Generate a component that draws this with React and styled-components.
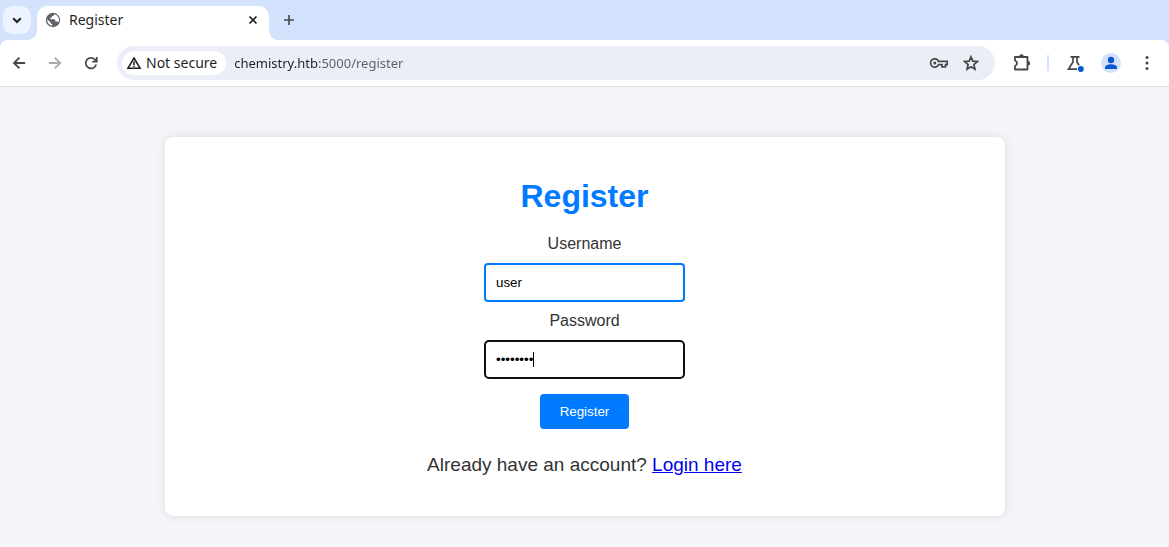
import React from "react";
import styled, { createGlobalStyle } from "styled-components";

const GlobalStyle = createGlobalStyle`
  *, *::before, *::after { box-sizing: border-box; }
  body {
    margin: 0;
    background: #f4f4f9;
    color: #333;
    font-family: "Liberation Sans", Arial, sans-serif;
  }
`;

const uiFont = `"Noto Sans", "Open Sans", sans-serif`;

const Browser = styled.div`
  display: flex;
  flex-direction: column;
  min-height: 100vh;
`;

const TabStrip = styled.header`
  display: flex;
  align-items: center;
  height: 40px;
  padding: 0 3px;
  background: #d3e3fd;
`;

const IconButton = styled.button`
  display: flex;
  align-items: center;
  justify-content: center;
  flex: none;
  width: ${(p) => p.$size || 28}px;
  height: ${(p) => p.$size || 28}px;
  padding: 0;
  border: 0;
  border-radius: ${(p) => p.$radius || "50%"};
  background: ${(p) => p.$fill || "transparent"};
  color: ${(p) => p.$color || "#474747"};

  svg { display: block; flex: none; }
`;

const Tab = styled.div`
  position: relative;
  display: flex;
  align-items: center;
  align-self: flex-end;
  width: 232px;
  height: 34px;
  margin: 0 6px;
  padding: 0 6px 6px 8px;
  border-radius: 10px 10px 0 0;
  background: #fff;
  color: #1f1f1f;

  &::before,
  &::after {
    content: "";
    position: absolute;
    bottom: 0;
    width: 10px;
    height: 10px;
  }
  &::before {
    right: 100%;
    background: radial-gradient(circle at 0 0, transparent 10px, #fff 10px);
  }
  &::after {
    left: 100%;
    background: radial-gradient(circle at 100% 0, transparent 10px, #fff 10px);
  }
`;

const TabTitle = styled.span`
  flex: 1;
  margin-left: 8px;
  font: 14px/20px ${uiFont};
`;

const ToolbarBack = styled.div`
  background: #d3e3fd;
`;

const Toolbar = styled.nav`
  display: flex;
  align-items: center;
  height: 47px;
  padding: 0 8px 0 5px;
  border-bottom: 1px solid #dfe0e2;
  border-radius: 8px 8px 0 0;
  background: #fff;
`;

const NavButtons = styled.div`
  display: flex;
  gap: 8px;
`;

const AddressBar = styled.div`
  display: flex;
  align-items: center;
  flex: 1;
  height: 34px;
  margin: 0 12px;
  padding: 0 10px 0 5px;
  border-radius: 17px;
  background: #ebeef7;
`;

const SecurityChip = styled.button`
  display: flex;
  align-items: center;
  gap: 4px;
  height: 24px;
  padding: 0 9px 0 4px;
  border: 0;
  border-radius: 12px;
  background: #fff;
  color: #1f1f1f;
  font: 14px/20px ${uiFont};
  white-space: nowrap;
`;

const UrlInput = styled.input`
  flex: 1;
  min-width: 0;
  margin-left: 8px;
  padding: 0;
  border: 0;
  outline: 0;
  background: linear-gradient(90deg, #1f1f1f 85px, #5a5d61 85px);
  background-clip: text;
  color: transparent;
  font: 13px/20px ${uiFont};
`;

const AddressActions = styled.div`
  display: flex;
  gap: 4px;
`;

const ToolbarActions = styled.div`
  display: flex;
  align-items: center;
  gap: 8px;
`;

const Divider = styled.span`
  width: 2px;
  height: 16px;
  margin: 0 4px;
  background: #d3e3fd;
`;

const Page = styled.main`
  flex: 1;
  padding: 50px 20px 30px;
`;

const Card = styled.section`
  max-width: 840px;
  margin: 0 auto;
  padding: 41px 20px 40px;
  border-radius: 8px;
  background: #fff;
  box-shadow: 0 0 10px rgba(0, 0, 0, 0.1);
  text-align: center;
`;

const Heading = styled.h1`
  margin: 0 0 20px;
  color: #007bff;
  font-size: 32px;
  line-height: 37px;
`;

const Form = styled.form`
  display: flex;
  flex-direction: column;
  align-items: center;
`;

const Label = styled.label`
  margin-bottom: 10px;
  font-size: 16px;
  line-height: 18px;
`;

const FieldBox = styled.div`
  position: relative;
  display: flex;
  margin-bottom: 10px;
`;

const Field = styled.input`
  width: 201px;
  height: 39px;
  padding: 0 10px;
  border: 2px solid ${(p) => (p.$active ? "#101010" : "#007bff")};
  border-radius: ${(p) => (p.$active ? 5 : 4)}px;
  outline: 0;
  background: #fff;
  color: #000;
  font-family: inherit;
`;

const Caret = styled.span`
  position: absolute;
  top: 12px;
  left: 49px;
  width: 1px;
  height: 15px;
  background: #000;
`;

const Submit = styled.button`
  margin: 5px 0 25px;
  padding: 10px 20px;
  border: 0;
  border-radius: 4px;
  background: #007bff;
  color: #fff;
  font-family: inherit;
`;

const Note = styled.p`
  margin: 0;
  font-size: 19px;
  line-height: 22px;
`;

const LoginLink = styled.a`
  color: #0000ee;
`;

function Icon({ size = 20, box = 24, stroke, width = 2, children }) {
  return (
    <svg
      width={size}
      height={size}
      viewBox={`0 0 ${box} ${box}`}
      fill={stroke ? "none" : "currentColor"}
      stroke={stroke ? "currentColor" : "none"}
      strokeWidth={width}
      aria-hidden="true"
    >
      {children}
    </svg>
  );
}

export default function App() {
  return (
    <Browser>
      <GlobalStyle />
      <TabStrip>
        <IconButton $fill="#ecf3fe" $radius="10px" $color="#1f1f1f" aria-label="Search tabs">
          <Icon size={16} box={16} stroke><path d="M4.2 6.2 8 10l3.8-3.8" /></Icon>
        </IconButton>
        <Tab>
          <Icon size={16} box={16}>
            <circle cx="8" cy="8" r="7.2" fill="#5f6368" />
            <path d="M9.2 2.2c-.3 1.5-1 1.7-2.2 1.8v1.5H5.4v1.7h3.7c.8 0 1.2.5 1.2 1.2v1h1.7c.8 0 1.3.4 1.6 1A6 6 0 0 0 9.2 2.2ZM2.2 7.3 5.6 10.5c0 1 .5 1.5 1.6 1.5v1.9A6 6 0 0 1 2.2 7.3Z" fill="#fff" />
          </Icon>
          <TabTitle>Register</TabTitle>
          <IconButton $size={20} $color="#1f1f1f" aria-label="Close tab">
            <Icon size={16} box={16} stroke width={1.7}><path d="m4.5 4.5 7 7m0-7-7 7" /></Icon>
          </IconButton>
        </Tab>
        <IconButton aria-label="New tab">
          <Icon size={16} box={16} stroke width={1.6}><path d="M8 3v10M3 8h10" /></Icon>
        </IconButton>
      </TabStrip>
      <ToolbarBack>
        <Toolbar>
          <NavButtons>
            <IconButton aria-label="Back">
              <Icon size={16} box={16} stroke width={1.8}><path d="M14.2 8H3.2M8.4 2.6 3 8l5.400 5.400" /></Icon>
            </IconButton>
            <IconButton $color="#ababab" aria-label="Forward">
              <Icon size={16} box={16} stroke width={1.8}><path d="M1.800 8h11M7.800 2.600 13.200 8l-5.400 5.400" /></Icon>
            </IconButton>
            <IconButton aria-label="Reload">
              <Icon size={16} box={16} stroke width={1.7}>
                <path d="M13.200 9.500A5.300 5.300 0 1 1 11.800 4.300L13.500 6M13.800 2v4.600H9.200" />
              </Icon>
            </IconButton>
          </NavButtons>
          <AddressBar>
            <SecurityChip>
              <Icon size={16} box={16} stroke width={1.6}>
                <path d="M8 3 14 13.200H2ZM8 6.500v3.500M8 10.800v1.300" />
              </Icon>
              Not secure
            </SecurityChip>
            <UrlInput aria-label="Address" defaultValue="chemistry.htb:5000/register" />
            <AddressActions>
              <IconButton aria-label="Passwords">
                <Icon size={20} box={20} stroke width={1.7}>
                  <path d="M9.600 8.300A4.200 4.200 0 1 0 9.600 11.700H13V13.800H16.500V11.700H18.200V8.300Z" />
                  <circle cx="5.800" cy="10" r="1.500" fill="currentColor" stroke="none" />
                </Icon>
              </IconButton>
              <IconButton aria-label="Bookmark">
                <Icon size={16} box={16} stroke width={1.7}>
                  <path d="m8 1.800 1.800 4.300 4.700.4-3.600 3.100 1.100 4.600L8 11.800l-4 2.400 1.100-4.600L1.500 6.500l4.700-.4Z" />
                </Icon>
              </IconButton>
            </AddressActions>
          </AddressBar>
          <ToolbarActions>
            <IconButton aria-label="Extensions">
              <Icon size={20} box={20} stroke width={1.8}>
                <path d="M4 4h12.500v12.500H4V13c2.600-1 2.600-4.500 0-5.500Z" strokeLinejoin="round" />
                <path d="M8.200 3.600a2.300 2.300 0 0 1 4.600 0ZM16.900 8a2.300 2.300 0 0 1 0 4.600Z" fill="currentColor" stroke="none" />
              </Icon>
            </IconButton>
            <Divider />
            <IconButton aria-label="Experiments">
              <Icon size={20} box={20} stroke width={1.7}>
                <path d="M5.500 3.800h9M8 4v5L3.500 16.200H12M12 4v5l2 3.200" />
                <circle cx="15.800" cy="16" r="3" fill="#0b57d0" stroke="none" />
              </Icon>
            </IconButton>
            <IconButton aria-label="Profile">
              <Icon size={20} box={20}>
                <circle cx="10" cy="10" r="10" fill="#d3e3fd" />
                <circle cx="10" cy="7" r="3.200" fill="#0b57d0" />
                <path d="M4 16v-1.500c0-2 3.500-3.200 6-3.200s6 1.200 6 3.200V16Z" fill="#0b57d0" />
              </Icon>
            </IconButton>
            <IconButton aria-label="Menu">
              <Icon size={16} box={16}>
                <circle cx="8" cy="2.500" r="1.500" />
                <circle cx="8" cy="8" r="1.500" />
                <circle cx="8" cy="13.500" r="1.500" />
              </Icon>
            </IconButton>
          </ToolbarActions>
        </Toolbar>
      </ToolbarBack>
      <Page>
        <Card>
          <Heading>Register</Heading>
          <Form onSubmit={(e) => e.preventDefault()}>
            <Label htmlFor="username">Username</Label>
            <FieldBox>
              <Field id="username" defaultValue="user" autoComplete="off" />
            </FieldBox>
            <Label htmlFor="password">Password</Label>
            <FieldBox>
              <Field id="password" type="password" defaultValue="password" $active />
              <Caret />
            </FieldBox>
            <Submit type="submit">Register</Submit>
          </Form>
          <Note>
            Already have an account? <LoginLink href="#login">Login here</LoginLink>
          </Note>
        </Card>
      </Page>
    </Browser>
  );
}
